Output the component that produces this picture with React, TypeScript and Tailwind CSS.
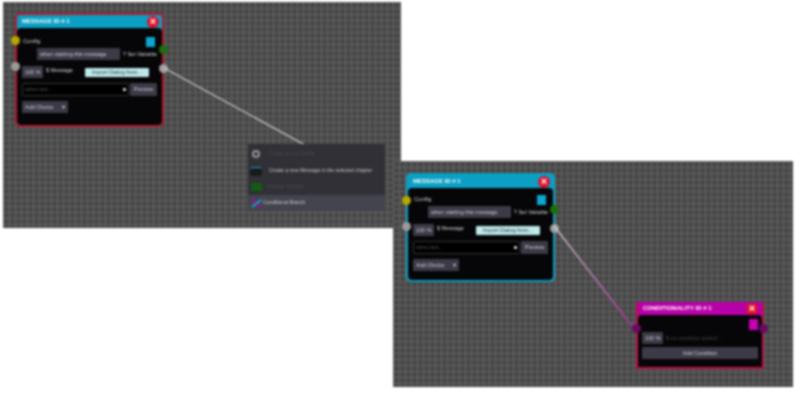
const grid = "absolute bg-[#474747] bg-[linear-gradient(#626262_1px,transparent_1px),linear-gradient(90deg,#626262_1px,transparent_1px)] bg-[size:6px_6px]";
const font = "font-['Liberation_Sans',sans-serif]";

function Pin({ className }: { className: string }) {
  return <span className={`absolute h-[9px] w-[9px] rounded-full ${className}`} />;
}

function Close() {
  return (
    <span className="flex h-[12px] w-[12px] items-center justify-center rounded-full bg-[#e0102a] text-[11px] font-bold leading-none text-white">
      ×
    </span>
  );
}

function Btn({ children, className = "" }: { children: React.ReactNode; className?: string }) {
  return (
    <span className={`flex h-[12px] items-center rounded-[1px] bg-[#3c3a46] px-[3px] text-[5.5px] whitespace-nowrap text-[#d0d0d8] ${className}`}>
      {children}
    </span>
  );
}

function MessageNode({ pos, border, top }: { pos: string; border: string; top: string }) {
  return (
    <div className={`absolute flex w-[149px] flex-col rounded-[5px] border-2 bg-[#0b9fc4] ${pos} ${border}`}>
      <div className="flex h-[13px] items-center justify-between pr-[3px] pl-[5px]">
        <span className="text-[6px] font-bold text-white">MESSAGE ID # 1</span>
        <Close />
      </div>
      <div className={`relative flex flex-col rounded-[4px] bg-[#060608] px-[5px] ${top}`}>
        <div className="flex h-[11px] items-center justify-between pr-[2px] pl-[1px]">
          <span className="text-[6px] text-[#d8d8d8]">Config</span>
          <span className="h-[10px] w-[9px] bg-[#0ea5d0]" />
        </div>
        <div className="mt-[1px] flex items-center gap-[3px] pl-[15px]">
          <Btn className="w-[85px]">when starting this message</Btn>
          <span className="text-[5.5px] whitespace-nowrap text-[#d8d8d8]">? Set Variable</span>
        </div>
        <div className="mt-[6px] flex items-center gap-[3px]">
          <Btn className="w-[21px]">100 %</Btn>
          <span className="-mt-[3px] text-[5.5px] text-[#d8d8d8]">$ Message</span>
          <span className="ml-[9px] flex h-[9px] w-[64px] items-center justify-center rounded-[1px] bg-[#bfeaea] text-[5.5px] whitespace-nowrap text-[#234]">
            Import Dialog from...
          </span>
        </div>
        <div className="mt-[5px] flex items-center gap-[1px]">
          <div className="flex h-[13px] w-[107px] items-center justify-between rounded-[2px] border border-[#333] bg-black px-[2px] text-[5px] text-[#555]">
            <span>select text...</span>
            <span className="h-[3px] w-[3px] rounded-full bg-white" />
          </div>
          <Btn className="h-[13px] w-[27px] justify-center">Preview</Btn>
        </div>
        <Btn className="mt-[5px] w-[46px] justify-between">
          <span>Add Choice</span>
          <span>▾</span>
        </Btn>
      </div>
      <Pin className="top-[21px] -left-[6px] bg-[#b5a800]" />
      <Pin className="top-[30px] -right-[6px] bg-[#1f6f12]" />
      <Pin className="top-[47px] -left-[6px] bg-[#9a9a9a]" />
      <Pin className="top-[49px] -right-[6px] bg-[#a0a0a0]" />
    </div>
  );
}

function ConditionNode() {
  return (
    <div className="absolute top-[141px] left-[243px] flex h-[67px] w-[128px] flex-col border-x-2 border-b-2 border-x-[#c01048] border-b-[#c01048] bg-[#b800a8]">
      <div className="flex h-[13px] items-center justify-between pr-[4px] pl-[5px]">
        <span className="text-[6px] font-bold text-white">CONDITIONALITY ID # 1</span>
        <Close />
      </div>
      <div className="flex flex-1 flex-col rounded-t-[4px] bg-[#060608] px-[4px] pt-[4px]">
        <span className="h-[11px] w-[9px] self-end bg-[#c400b0]" />
        <div className="mt-[2px] flex items-center gap-[3px]">
          <Btn className="w-[21px]">100 %</Btn>
          <span className="text-[5.5px] text-[#444]">$ no condition added...</span>
        </div>
        <Btn className="mt-[3px] w-full justify-center">Add Condition</Btn>
      </div>
      <Pin className="top-[22px] -left-[6px] bg-[#6b0a62]" />
      <Pin className="top-[22px] -right-[6px] bg-[#6b0a62]" />
    </div>
  );
}

export default function App() {
  return (
    <div className={`relative h-[401px] w-[800px] overflow-hidden bg-white blur-[0.8px] ${font}`}>
      <div className={`${grid} top-[2px] left-[3px] h-[226px] w-[398px]`}>
        <MessageNode pos="top-[11px] left-[12px]" border="border-[#b8182c]" top="pt-[8px] pb-[12px]" />
        <svg className="absolute inset-0" width="398" height="226">
          <line x1="161" y1="66" x2="302" y2="143" stroke="#d0d0d0" strokeWidth="1.3" />
        </svg>
        <div className="absolute top-[142px] left-[245px] flex h-[67px] w-[137px] flex-col bg-[#303036] text-[5px]">
          <div className="flex h-[19px] items-center gap-[9px] pl-[4px] text-[#4a4a50]">
            <span className="h-[8px] w-[8px] rounded-full border-2 border-[#999]" />
            <span>Create a new Config</span>
          </div>
          <div className="flex h-[16px] items-center gap-[7px] pl-[2px] text-[#c8c8c8]">
            <span className="h-[9px] w-[12px] rounded-[3px] border-t border-[#0ea5c8] bg-[#1a1a1a]" />
            <span>Create a new Message in the selected chapter</span>
          </div>
          <div className="flex h-[16px] items-center gap-[5px] pl-[3px] text-[#4a4a50]">
            <span className="h-[8px] w-[11px] bg-[#145a14]" />
            <span>Change Variable</span>
          </div>
          <div className="flex h-[16px] items-center gap-[1px] bg-[#44444e] pl-[3px] text-[#c8c8c8]">
            <svg width="11" height="9" viewBox="0 0 11 9">
              <path d="M1 1 L10 8" stroke="#b800a8" strokeWidth="2" />
              <path d="M1 8 L10 1" stroke="#0ea5d0" strokeWidth="2" />
            </svg>
            <span>Conditional Branch</span>
          </div>
        </div>
      </div>
      <div className={`${grid} top-[161px] left-[393px] h-[226px] w-[400px]`}>
        <MessageNode pos="top-[12px] left-[13px]" border="border-[#0b9fc4]" top="pt-[6px] pb-[9px]" />
        <svg className="absolute inset-0" width="400" height="226">
          <defs>
            <linearGradient id="wire" x1="0" y1="0" x2="1" y2="1">
              <stop offset="0" stopColor="#d8d8d8" />
              <stop offset="1" stopColor="#b020a8" />
            </linearGradient>
          </defs>
          <path d="M161 65 L243 170" stroke="url(#wire)" strokeWidth="1.3" fill="none" />
        </svg>
        <ConditionNode />
      </div>
    </div>
  );
}
